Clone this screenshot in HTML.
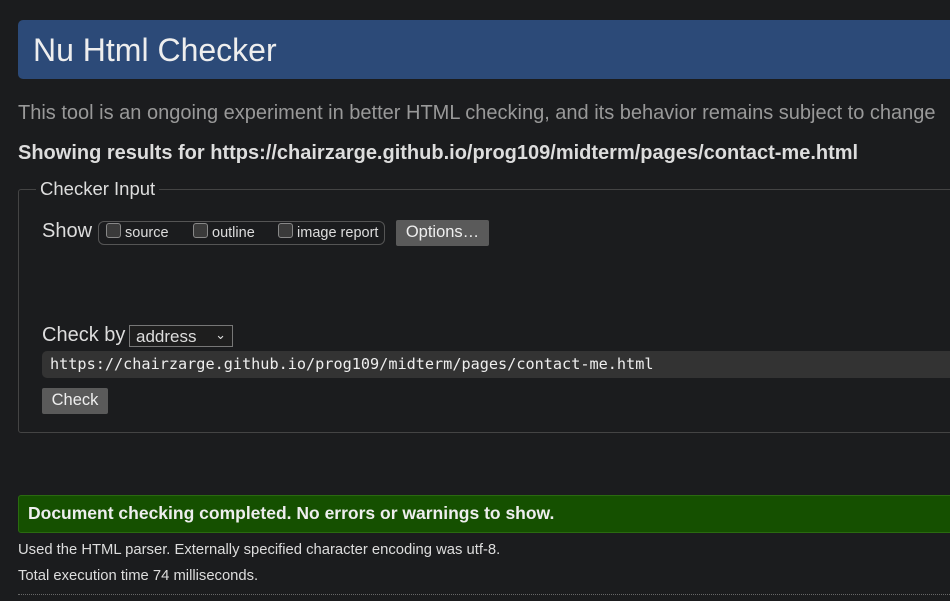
<!DOCTYPE html>
<html><head><style>
body{margin:0;background:#1b1c1e;color:#ddd;font-family:"Liberation Sans",sans-serif;width:950px;height:601px;overflow:hidden;position:relative}
.a{position:absolute;white-space:nowrap}
.hdr{left:18px;top:20px;width:940px;height:59px;background:#2c4a78;border-radius:5px}
.cb{display:inline-block;width:13px;height:13px;border:1px solid #888;border-radius:3px;background:#3a3a3a;vertical-align:-1px}
.btn{background:#5a5a5a;color:#eee;border-radius:2px}
</style></head><body>
<div class="a hdr"></div>
<div class="a" style="left:33px;top:32px;font-size:32px;color:#eee">Nu Html Checker</div>
<div class="a" style="left:18px;top:102px;font-size:20px;color:#999">This tool is an ongoing experiment in better HTML checking, and its behavior remains subject to change</div>
<div class="a" style="left:18px;top:142px;font-size:20px;font-weight:bold;color:#ddd">Showing results for https://chairzarge.github.io/prog109/midterm/pages/contact-me.html</div>
<div class="a" style="left:18px;top:189px;width:940px;height:242px;border:1px solid #444;border-radius:3px"></div>
<div class="a" style="left:36px;top:178px;padding:0 4px;background:#1b1c1e;font-size:18.5px;color:#ddd">Checker Input</div>
<div class="a" style="left:42px;top:220px;font-size:20px">Show</div>
<div class="a" style="left:98px;top:221px;width:285px;height:22px;border:1px solid #555;border-radius:6px"></div>
<div class="a" style="left:106px;top:223px;font-size:14.5px;color:#ddd"><span class="cb"></span> source</div>
<div class="a" style="left:193px;top:223px;font-size:14.5px;color:#ddd"><span class="cb"></span> outline</div>
<div class="a" style="left:278px;top:223px;font-size:14.5px;color:#ddd"><span class="cb"></span> image report</div>
<div class="a btn" style="left:396px;top:220px;width:93px;height:26px;line-height:25px;text-align:center;font-size:16.5px">Options…</div>
<div class="a" style="left:42px;top:324px;font-size:20px">Check by</div>
<div class="a" style="left:129px;top:325px;height:22px;border:1px solid #777;background:#1e1e1e;font-size:17px;line-height:21px;padding-left:6px;box-sizing:border-box;width:104px">address<span style="position:absolute;right:6px;top:-2px;font-size:13px">&#8964;</span></div>
<div class="a" style="left:42px;top:351px;width:920px;height:27px;background:#333;border-radius:5px"></div>
<div class="a" style="left:50px;top:355px;font-family:'DejaVu Sans Mono','Liberation Mono',monospace;font-size:15.2px;color:#eee">https://chairzarge.github.io/prog109/midterm/pages/contact-me.html</div>
<div class="a btn" style="left:42px;top:388px;width:66px;height:26px;line-height:25px;text-align:center;font-size:16.5px">Check</div>
<div class="a" style="left:18px;top:495px;width:940px;height:36px;background:#155000;border:1px solid #2a6a10;border-radius:3px"></div>
<div class="a" style="left:28px;top:503px;font-size:17.5px;font-weight:bold;color:#eee">Document checking completed. No errors or warnings to show.</div>
<div class="a" style="left:18px;top:542px;font-size:14.8px;color:#ddd">Used the HTML parser. Externally specified character encoding was utf-8.</div>
<div class="a" style="left:18px;top:568px;font-size:14.8px;color:#ddd">Total execution time 74 milliseconds.</div>
<div class="a" style="left:18px;top:594px;width:940px;border-top:1px dotted #666"></div>
</body></html>
